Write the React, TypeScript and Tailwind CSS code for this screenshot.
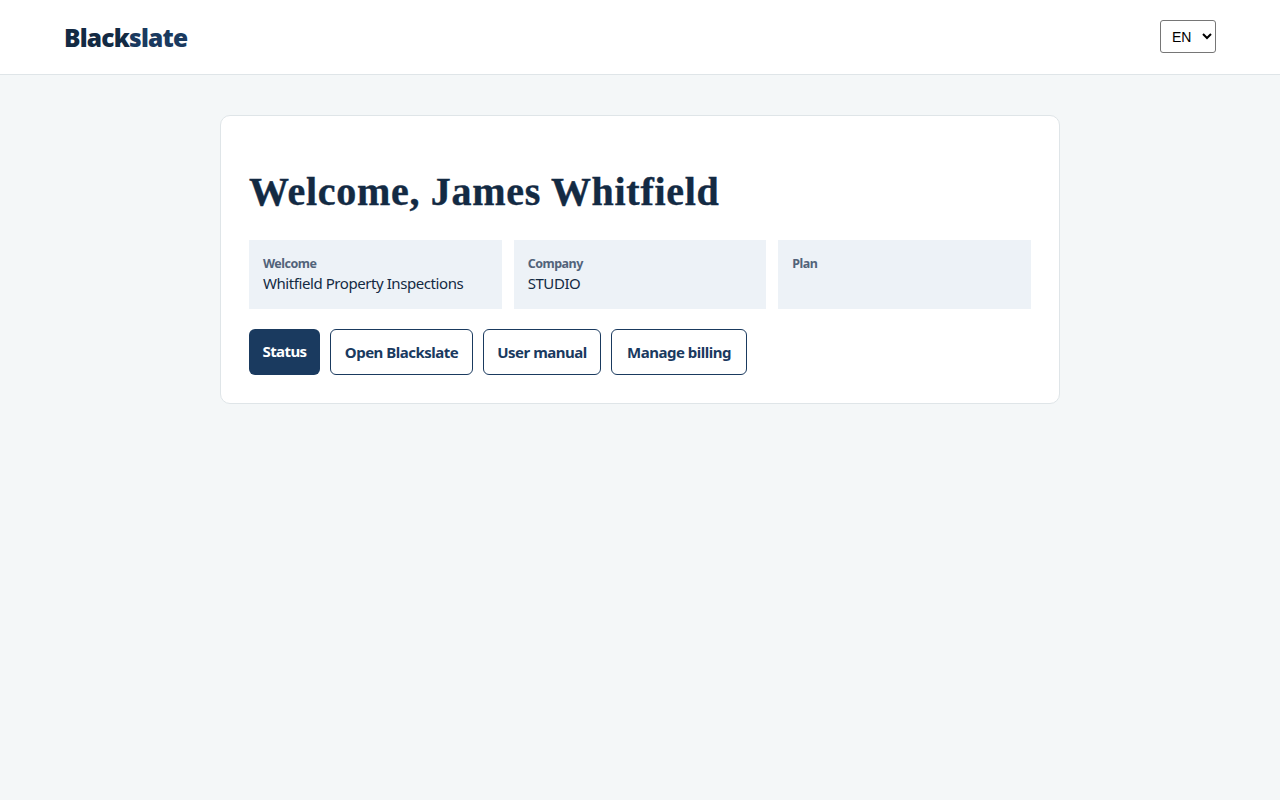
import React from 'react';

const infoCards = [
  { label: 'Welcome', value: 'Whitfield Property Inspections' },
  { label: 'Company', value: 'STUDIO' },
  { label: 'Plan', value: '' },
];

const linkClass =
  'h-[46px] bg-white border-[1.5px] border-[#1a3a5f] text-[#1a3a5f] font-bold text-[15px] tracking-[-0.5px] rounded-md';

export default function App() {
  return (
    <div className="min-h-screen bg-[#f4f7f8] font-['Noto_Sans',sans-serif] text-[#132a43]">
      <header className="h-[75px] bg-white border-b border-[#dfe5e8] flex items-start justify-between pl-[64px] pr-[64px] pt-5">
        <div className="font-black text-[24.5px] leading-[36px] tracking-[-0.8px] text-[#132a43]">
          Black<span className="text-[#1a3a5f]">slate</span>
        </div>
        <select className="h-[33px] w-[56px] bg-white border border-[#767676] rounded-[3px] pl-[7px] text-sm text-black font-['Liberation_Sans',sans-serif]">
          <option>EN</option>
        </select>
      </header>

      <main className="w-[840px] mx-auto pt-10">
        <div className="bg-white border border-[#dfe5e8] rounded-[10px] px-7 pt-[28px] pb-7">
          <h1 className="font-['Liberation_Serif',serif] font-bold text-[40px] leading-[96px] tracking-[0.7px] [-webkit-text-stroke:0.4px] text-[#132a43]">
            Welcome, James Whitfield
          </h1>
          <div className="grid grid-cols-3 gap-3">
            {infoCards.map((card) => (
              <div key={card.label} className="h-[69px] bg-[#edf2f7] px-3.5 pt-[15px]">
                <div className="text-[12.5px] leading-[18px] font-bold tracking-[-0.5px] text-[#52637a]">{card.label}</div>
                <div className="text-[15px] leading-[20px] tracking-[-0.43px] text-[#132a43]">{card.value}</div>
              </div>
            ))}
          </div>
          <div className="flex gap-2.5 mt-5">
            <button className="h-[46px] w-[71px] pb-px bg-[#1a3a5f] text-white font-bold text-[15px] tracking-[-0.6px] rounded-md">Status</button>
            <button className={`${linkClass} w-[143px]`}>Open Blackslate</button>
            <button className={`${linkClass} w-[118px]`}>User manual</button>
            <button className={`${linkClass} w-[136px]`}>Manage billing</button>
          </div>
        </div>
      </main>
    </div>
  );
}
